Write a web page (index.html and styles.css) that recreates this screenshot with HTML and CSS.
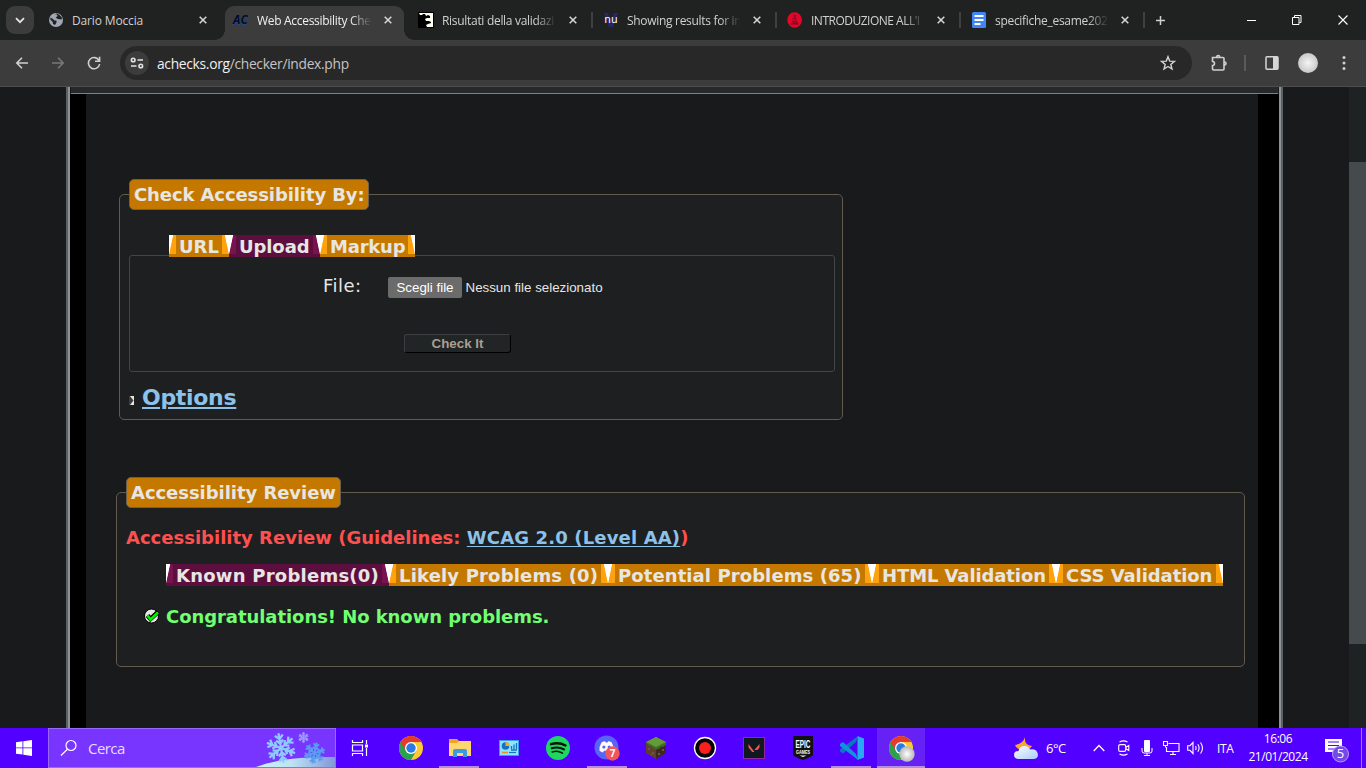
FILE: index.html
```html
<!DOCTYPE html>
<html lang="it">
<head>
<meta charset="utf-8">
<title>Web Accessibility Checker</title>
<link rel="stylesheet" href="styles.css">
</head>
<body>
<div class="screen">
  <header class="tabstrip">
    <button class="tab-search"><svg width="10" height="7" viewBox="0 0 10 7"><path d="M1 1.2l4 4 4-4" fill="none" stroke="#e3e3e3" stroke-width="1.8"/></svg></button>
    <div class="tab first">
      <svg class="fav" width="16" height="16" viewBox="0 0 16 16"><circle cx="8" cy="8" r="7" fill="#a0a7b3"/><path d="M2.3 5.5L5 7l1.500 1.500h2v2l-1.500 2.500-2-1-.5-2.500-2-1.500zM7 2.200l2 .3.500 1.500-1.800 1.800L10 7l3.500.5.500-2L11.500 3 9 1.500z" fill="#202120"/></svg>
      <span class="tab-title t1">Dario Moccia</span>
      <svg class="x" viewBox="0 0 8 8"><path d="M.7.7l6.600 6.600M7.300.7L.7 7.300"/></svg>
    </div>
    <div class="tab active">
      <span class="fav ac">AC</span>
      <span class="tab-title t2">Web Accessibility Che</span>
      <svg class="x" viewBox="0 0 8 8"><path d="M.7.7l6.600 6.600M7.300.7L.7 7.300"/></svg>
    </div>
    <div class="tab third">
      <svg class="fav" width="16" height="16" viewBox="0 0 16 16"><path d="M0 0h16v16H0z" fill="#000"/><path d="M1 1h14v14H9l-1-2 2-1 3-1v-1l-2-1-3 0-1-2 2-1 3 0V4l-2-1-2 1-1-2H5L4 3 2 3z" fill="#fffff2"/></svg>
      <span class="tab-title t3">Risultati della validazi</span>
      <svg class="x" viewBox="0 0 8 8"><path d="M.7.7l6.600 6.600M7.300.7L.7 7.300"/></svg>
    </div>
    <div class="tab sep">
      <span class="fav nu"><svg width="16" height="16" viewBox="0 0 16 16"><path d="M1 1h4l3 9 3-9h4l-5 14H6z" fill="#27266c"/></svg><b>nu</b></span>
      <span class="tab-title t4">Showing results for in</span>
      <svg class="x" viewBox="0 0 8 8"><path d="M.7.7l6.600 6.600M7.300.7L.7 7.300"/></svg>
    </div>
    <div class="tab sep">
      <svg class="fav" width="16" height="16" viewBox="0 0 16 16"><ellipse cx="7.600" cy="8" rx="7.300" ry="7.800" fill="#e5062b"/><path d="M6 3l3 1M7.500 3v3M5.500 6l2 1.500 2-1.500M5 9l2.500 1L10 8.500M4.500 12l2-1.500 1.500 1.500 2-1.500.8 1.500z" fill="none" stroke="#85091e" stroke-width="1.100"/></svg>
      <span class="tab-title t5">INTRODUZIONE ALL'I</span>
      <svg class="x" viewBox="0 0 8 8"><path d="M.7.7l6.600 6.600M7.300.7L.7 7.300"/></svg>
    </div>
    <div class="tab sep last">
      <svg class="fav" width="16" height="16" viewBox="0 0 16 16"><rect x="1" width="14" height="16" rx="1.500" fill="#4285f4"/><path d="M3.500 4h9M3.500 8h9M3.500 12h6" stroke="#fff" stroke-width="1.800"/></svg>
      <span class="tab-title t6">specifiche_esame202</span>
      <svg class="x" viewBox="0 0 8 8"><path d="M.7.7l6.600 6.600M7.300.7L.7 7.300"/></svg>
    </div>
    <div class="newtab"><svg width="11" height="11" viewBox="0 0 11 11"><path d="M5.500 1v9M1 5.500h9" stroke="#cfcfcf" stroke-width="1.500"/></svg></div>
    <div class="winbtns">
      <svg width="9" height="12" viewBox="0 0 9 12"><path d="M0 6.500h9" stroke="#fff"/></svg>
      <svg width="10" height="12" viewBox="0 0 10 12"><path d="M.5 3.500h6.500v7H.5zM2.500 3V1.500H9v7H7.500" fill="none" stroke="#fff"/></svg>
      <svg width="10" height="12" viewBox="0 0 10 12"><path d="M.5 1.500l9 9M9.500 1.500l-9 9" stroke="#fff" stroke-width="1.100"/></svg>
    </div>
  </header>

  <nav class="toolbar">
    <svg width="14" height="14" viewBox="0 0 14 14"><path d="M13 7H2M7 1.800L1.800 7 7 12.200" fill="none" stroke="#d0d0d0" stroke-width="1.600"/></svg>
    <svg width="14" height="14" viewBox="0 0 14 14"><path d="M1 7h11M7 1.800L12.200 7 7 12.200" fill="none" stroke="#787878" stroke-width="1.600"/></svg>
    <svg width="14" height="14" viewBox="0 0 14 14"><path d="M12 4.500A5.600 5.600 0 1 0 12.600 8M12.600.800v4.500H8" fill="none" stroke="#d0d0d0" stroke-width="1.600"/></svg>
    <div class="omnibox">
      <span class="site"><svg width="14" height="12" viewBox="0 0 14 12"><g fill="none" stroke="#e3e3e3" stroke-width="1.600"><circle cx="3.200" cy="3" r="1.800"/><path d="M7.500 3H13M1 9h5.500"/><circle cx="10.800" cy="9" r="1.800"/></g></svg></span>
      <span class="url"><b>achecks.org</b>/checker/index.php</span>
      <svg class="star" width="16" height="16" viewBox="0 0 16 16"><path d="M8 1.700l1.700 4.400 4.700.3-3.600 3 1.200 4.600L8 11.500 4 14l1.200-4.600-3.600-3 4.700-.3z" fill="none" stroke="#d3d3d3" stroke-width="1.400"/></svg>
    </div>
    <div class="actions">
      <svg width="18" height="18" viewBox="0 0 18 18"><path d="M2.500 3.500h10.500q1 0 1 1v10.500q0 1-1 1H3.500q-1 0-1-1v-3.500q2 0 2-2t-2-2zM6.700 3q0-1.500 1.500-1.500T9.700 3M14.500 8q1.500 0 1.500 1.500T14.500 11" fill="none" stroke="#d0d0d0" stroke-width="1.600"/></svg>
      <i></i>
      <svg width="14" height="14" viewBox="0 0 14 14"><rect x="1" y=".8" width="12" height="12.400" rx="1" fill="none" stroke="#d6d6d6" stroke-width="1.500"/><path d="M8 1h5v12H8z" fill="#d6d6d6"/></svg>
      <span class="avatar"></span>
      <svg width="4" height="16" viewBox="0 0 4 16" fill="#d0d0d0"><circle cx="2" cy="2.500" r="1.500"/><circle cx="2" cy="8" r="1.500"/><circle cx="2" cy="13.500" r="1.500"/></svg>
    </div>
  </nav>

  <main class="viewport">
    <div class="page">
      <div class="topline"></div>
      <div class="content">
        <section class="fieldset check">
          <h2 class="legend l1">Check Accessibility By:</h2>
          <div class="subtabs">
            <span class="st w60">URL</span><span class="st on w91">Upload</span><span class="st w95">Markup</span>
          </div>
          <div class="inner">
            <div class="filerow"><label>File:</label><button class="choose">Scegli file</button><span class="nofile">Nessun file selezionato</span></div>
            <button class="checkit">Check It</button>
          </div>
          <div class="options"><svg width="5" height="9" viewBox="0 0 5 9"><path d="M0 0h5v9H0z" fill="#e8e6e3"/><path d="M0 0l1 0 3.500 4.500L1 9H0z" fill="#3c3c3c"/></svg><a>Options</a></div>
        </section>
        <section class="fieldset review">
          <h2 class="legend l2">Accessibility Review</h2>
          <h3 class="guide">Accessibility Review (Guidelines: <a>WCAG 2.0 (Level AA)</a>)</h3>
          <div class="subtabs">
            <span class="st on w223">Known Problems(0)</span><span class="st w219">Likely Problems (0)</span><span class="st w264">Potential Problems (65)</span><span class="st w184">HTML Validation</span><span class="st w167">CSS Validation</span>
          </div>
          <p class="congrats"><svg width="16" height="16" viewBox="0 0 16 16"><circle cx="7.500" cy="8" r="7" fill="#e8e6e3" stroke="#000"/><path d="M3.500 7.500l3 3.500 7.500-7" fill="none" stroke="#000" stroke-width="4.500"/><path d="M3.500 7.500l3 4 7.500-7" fill="none" stroke="#00f000" stroke-width="2.600"/></svg><span>Congratulations! No known problems.</span></p>
        </section>
      </div>
    </div>
    <div class="scroll"><div class="thumb"></div></div>
  </main>

  <footer class="taskbar">
    <div class="start"><svg width="16" height="16" viewBox="0 0 16 16" fill="#fff"><path d="M0 2.200l6.500-.9v6.200H0zM7.300 1.200L16 0v7.500H7.300zM0 8.300h6.500v6.300L0 13.700zM7.300 8.300H16V16l-8.700-1.200z"/></svg></div>
    <div class="search">
      <svg width="18" height="18" viewBox="0 0 18 18"><circle cx="11" cy="6.500" r="5" fill="none" stroke="#fff" stroke-width="1.200"/><path d="M7.400 10.200L1 16.500" stroke="#fff" stroke-width="1.200"/></svg>
      <span>Cerca</span>
      <svg class="snow" width="79" height="38" viewBox="0 0 79 38">
        <defs><linearGradient id="hill" x2="1"><stop stop-color="#c9f3f8"/><stop offset=".45" stop-color="#bde3f5"/><stop offset="1" stop-color="#8298da"/></linearGradient>
        <g id="flake"><g id="arm"><path d="M0 0V-15M-4-13L0-9 4-13M-3.500-8L0-4.500 3.500-8"/></g><use href="#arm" transform="rotate(60)"/><use href="#arm" transform="rotate(120)"/><use href="#arm" transform="rotate(180)"/><use href="#arm" transform="rotate(240)"/><use href="#arm" transform="rotate(300)"/></g></defs>
        <path d="M0 38Q28 27 79 28v10z" fill="url(#hill)"/>
        <use href="#flake" transform="translate(25 19) rotate(-10)" fill="none" stroke="#8fcaff" stroke-width="2.300"/>
        <use href="#flake" transform="translate(47.500 8.500) scale(.36)" fill="none" stroke="#9c9eff" stroke-width="2.800"/>
        <use href="#flake" transform="translate(58.500 24) rotate(12) scale(.72)" fill="none" stroke="#5b9cf2" stroke-width="2.600"/>
      </svg>
    </div>
    <div class="task tv"><svg width="18" height="16" viewBox="0 0 18 16"><path d="M1.500 0v2.500h10V0M1.500 16v-2.500h10V16M1.500 5h10v6h-10zM15.500 0v4M15.500 8v8" fill="none" stroke="#fff" stroke-width="1.200"/><path d="M14 4.500h3v3h-3z" fill="#fff"/></svg></div>
    <div class="apps">
      <div class="task"><svg width="24" height="24" viewBox="0 0 24 24"><use href="#chrome"/><defs><g id="chrome"><circle cx="12" cy="12" r="12" fill="#fcc934"/><path d="M1.600 6A12 12 0 0 0 12 24L17.200 15 12 12z" fill="#2aa14b"/><path d="M1.600 6A12 12 0 0 1 22.400 6H12L6.800 15z" fill="#e33b2e"/><circle cx="12" cy="12" r="6" fill="#fff"/><circle cx="12" cy="12" r="4.700" fill="#287be8"/></g></defs></svg></div>
      <div class="task open"><svg width="22" height="20" viewBox="0 0 22 20"><path d="M0 1h8l2 2h12v15H0z" fill="#eba81d"/><path d="M0 5h8l2-2h12v15H0z" fill="#ffd66e"/><path d="M4 19v-6q0-2 2-2h10q2 0 2 2v6h-4v-4H8v4z" fill="#3c9be0"/></svg></div>
      <div class="task"><svg width="20" height="16" viewBox="0 0 20 16"><rect x=".5" y=".5" width="19" height="15" fill="#8ee4ff" stroke="#399ee6"/><circle cx="6.500" cy="6" r="3.800" fill="#1671be"/><path d="M6.500 6V2a4 4 0 0 1 4 4z" fill="#f7a62e"/><path d="M12.500 9V6M15 9V4.500M17.500 9V3M12 10h6" stroke="#1671be" stroke-width="1.300"/><path d="M3 12.500h6" stroke="#ed8e21" stroke-width="1.600"/><path d="M10 12.500h7" stroke="#1671be" stroke-width="1.200"/></svg></div>
      <div class="task"><svg width="24" height="24" viewBox="0 0 24 24"><circle cx="12" cy="12" r="12" fill="#1ed760"/><g fill="none" stroke="#08120a" stroke-linecap="round"><path d="M5 8.200q8-2.300 14.500 1.300" stroke-width="2.400"/><path d="M5.700 12.200q6.800-1.900 12.300 1.200" stroke-width="2"/><path d="M6.200 15.900q5.500-1.600 10.300 1.200" stroke-width="1.600"/></g></svg></div>
      <div class="task open d"><svg width="26" height="26" viewBox="0 0 26 26"><circle cx="12.500" cy="12.500" r="12" fill="#5865f2"/><path d="M7.500 7.500q2-1.200 3.500-1.200l.7 1.200h1.800l.7-1.200q1.800 0 3.500 1.200 2.500 4 2 8.300-1.500 1.200-3.500 1.700l-1-1.700H10l-1 1.700q-2-.5-3.500-1.700Q5 11.500 7.500 7.500z" fill="#fff"/><circle cx="9.900" cy="12" r="1.600" fill="#5865f2"/><circle cx="15.200" cy="12" r="1.600" fill="#5865f2"/><circle cx="18.500" cy="18.500" r="7.200" fill="#f0565b"/><text x="18.500" y="22.200" text-anchor="middle" class="badge7">7</text></svg></div>
      <div class="task"><svg width="22" height="24" viewBox="0 0 22 24"><path d="M1 6l10-5 10 5v11l-10 6-10-6z" fill="#5d402e"/><path d="M11 11l10-5v11l-10 6z" fill="#3c291f"/><path d="M1 6l10-5 10 5v3l-2 1-1 1-2-.5-2 2.500-1-.5-2 1.500-2-2-1 .5-2-2.500-2 0-2-2z" fill="#426d28"/><path d="M1 6l10-5 10 5-10 5z" fill="#629b38"/><path d="M3 12h2v2H3zM7 16h2v2H7zM5 18h2v2zM13 17h2v2h-2zM17 13h2v2h-2z" fill="#765441"/></svg></div>
      <div class="task"><svg width="24" height="24" viewBox="0 0 24 24"><circle cx="12" cy="12" r="10.500" fill="#050507" stroke="#fff" stroke-width="1.300"/><circle cx="12" cy="12" r="6" fill="#fb2020"/></svg></div>
      <div class="task"><svg width="22" height="22" viewBox="0 0 22 22"><rect x=".5" y=".5" width="21" height="21" fill="#101820" stroke="#8e299c"/><path d="M5.500 7l6 8H9.200L5.500 10.500zM16.500 7v3.500L14.500 13h-3.200z" fill="#ff4c57"/></svg></div>
      <div class="task"><svg width="22" height="24" viewBox="0 0 22 24"><path d="M1 0h20v19q-1 1.500-10 5Q2 20.500 1 19z" fill="#121014"/><text x="11" y="11.500" text-anchor="middle" class="epic" textLength="15" lengthAdjust="spacingAndGlyphs">EPIC</text><text x="11" y="17.500" text-anchor="middle" class="games" textLength="14" lengthAdjust="spacingAndGlyphs">GAMES</text><path d="M7.500 19.500h7L11 21z" fill="#fff"/></svg></div>
      <div class="task open"><svg width="24" height="24" viewBox="0 0 24 24"><path d="M18 0l-2 6L3 17.500 0 15.500v-2z" fill="#0878bd"/><path d="M18 24l-2-6L3 6 0 8v2z" fill="#1094da"/><path d="M17.500 0L24 2.500v19L17.500 24z" fill="#27a9f3"/></svg></div>
      <div class="task open current"><svg width="28" height="28" viewBox="0 0 28 28"><defs><radialGradient id="ball"><stop stop-color="#fff"/><stop offset="1" stop-color="#b8b8b8"/></radialGradient></defs><use href="#chrome" x="2" y="2"/><circle cx="20" cy="20" r="7.700" fill="url(#ball)"/></svg></div>
    </div>
    <div class="tray">
      <svg class="weather" width="26" height="26" viewBox="0 0 26 26"><defs><linearGradient id="cloud" x2="1" y2="1"><stop stop-color="#fff"/><stop offset="1" stop-color="#a9cdf7"/></linearGradient></defs><path d="M12 2q-1 8 7 9-3 5-9 4-7-1-8-5 8-1 10-8z" fill="#f7a733"/><path d="M5 24q-4-.5-4-4 0-4 4.500-4 1-5 6-5 4 0 5.500 3.500 7-1 8 5 0 4-4 4.500z" fill="url(#cloud)"/></svg>
      <span class="temp">6°C</span>
      <svg class="up" width="12" height="8" viewBox="0 0 12 8"><path d="M.7 7L6 1.500 11.300 7" fill="none" stroke="#fff" stroke-width="1.300"/></svg>
      <svg class="cam" width="12" height="16" viewBox="0 0 12 16"><path d="M1.500 2Q5.500-.2 9.500 2M1.500 14Q5.500 16.200 9.500 14M2.200 4.600h4q1.500 0 1.500 1.500v3.800q0 1.500-1.500 1.500h-4q-1.500 0-1.500-1.500V6.100q0-1.500 1.500-1.500zM8 7.200L10.800 5.500v5L8 8.800" fill="none" stroke="#fff" stroke-width="1.100"/></svg>
      <svg class="mic" width="12" height="16" viewBox="0 0 12 16"><rect x="3" width="6" height="12" rx="1" fill="#fff"/><path d="M1 8v3q0 2 2 2h6q2 0 2-2V8M6 13v2.500M3 15.500h6" fill="none" stroke="#fff"/></svg>
      <svg class="net" width="17" height="15" viewBox="0 0 17 15"><path d="M5.500 2.500h10.500v8H3.500V6M7 13.500h6M10 10.500v3M.5.500h4v4h-4zM2.500 4.500v2" fill="none" stroke="#fff" stroke-width="1.100"/></svg>
      <svg class="vol" width="17" height="14" viewBox="0 0 17 14"><path d="M.7 4.700H3L6 1.500v11L3 9.300H.7zM8.500 5q1.200 2 0 4M10.800 3.300q2.600 3.700 0 7.400M13.500 1.500q4 5.500 0 11" fill="none" stroke="#fff" stroke-width="1.100"/></svg>
      <span class="lang">ITA</span>
      <div class="clock"><span>16:06</span><span class="date">21/01/2024</span></div>
      <svg class="note" width="25" height="26" viewBox="0 0 25 26"><path d="M0 2h17v13h-5l-2 2-3-2H0z" fill="#fff"/><path d="M3 5h11M3 8.500h11M3 12h7" stroke="#5500ff"/><circle cx="15.500" cy="17" r="8" fill="#7748e8" stroke="#b19cf5"/><text x="15.500" y="21.200" text-anchor="middle" class="five">5</text></svg>
    </div>
  </footer>
</div>
</body>
</html>
```

FILE: styles.css
```css
* { box-sizing: border-box; }
body { margin: 0; background: #181a1b; }
svg { display: block; flex: none; }
button { border: 0; padding: 0; display: block; }
h2, h3, p { margin: 0; }
.screen { width: 1366px; height: 768px; overflow: hidden; display: flex; flex-direction: column; font-family: "Open Sans", "Noto Sans", sans-serif; }

/* browser tab strip */
.tabstrip { height: 40px; flex: none; background: #202221; display: flex; }
.tab-search { width: 28px; height: 28px; margin: 6px 7px 0 6px; border-radius: 9px; background: #3c3c3c; display: flex; align-items: center; justify-content: center; flex: none; }
.tab { width: 184px; flex: none; height: 40px; padding: 0 17px 0 7px; display: flex; align-items: center; position: relative; }
.tab.active { width: 179px; margin-top: 6px; height: 34px; padding: 0 12px 6px 8px; background: #3c3c3c; border-radius: 9px 9px 0 0; }
.tab.active::before, .tab.active::after { content: ""; position: absolute; bottom: 0; width: 10px; height: 10px; }
.tab.active::before { left: -10px; background: radial-gradient(circle at 0 0, #202221 9.500px, #3c3c3c 10px); }
.tab.active::after { right: -10px; background: radial-gradient(circle at 100% 0, #202221 9.500px, #3c3c3c 10px); }
.tab.third { width: 188px; padding-left: 14px; padding-right: 15px; }
.tab.sep { padding-left: 11px; padding-right: 15px; }
.tab.sep::before { content: ""; position: absolute; left: -1px; top: 12px; width: 2px; height: 16px; background: #3f4141; }
.tab.last::after { content: ""; position: absolute; right: -1px; top: 12px; width: 2px; height: 16px; background: #3f4141; }
.tab.first { width: 177px; padding-right: 11px; }
.tab.first + .tab { margin-left: 7px; }
.fav { width: 16px; height: 16px; margin-right: 8px; flex: none; }
.tab.third .fav { margin-right: 8px; }
.ac { font: italic bold 12px/15px "Open Sans", sans-serif; color: #070b22; text-shadow: 1px 1px 0 #204692; }
.nu { position: relative; }
.nu b { position: absolute; left: 0; top: 0; width: 16px; text-align: center; font: 10.500px/15px "DejaVu Sans", sans-serif; color: #fff; }
.tab-title { flex: 1; min-width: 0; white-space: nowrap; font-size: 12px; line-height: 18px; color: #d0d0d0; margin-right: 10px; padding-top: 1px; }
.t1 { letter-spacing: -.15px; }
.active .tab-title { color: #f0f0f0; }
.t2, .t3, .t4, .t5, .t6 { -webkit-mask-image: linear-gradient(90deg, #000 80%, transparent 98%); mask-image: linear-gradient(90deg, #000 80%, transparent 98%); letter-spacing: -.3px; }
.t5 { letter-spacing: -.5px; }
.x { width: 8px; height: 8px; }
.x path { stroke: #d8d8d8; stroke-width: 1.500; fill: none; }
.newtab { width: 40px; padding: 15px 0 0 11px; }
.winbtns { flex: 1; display: flex; justify-content: flex-end; align-items: center; gap: 36px; padding-right: 18px; }

/* address toolbar */
.toolbar { height: 47px; flex: none; background: #3c3c3c; border-bottom: 1px solid #4b4d4e; display: flex; align-items: center; gap: 22px; padding-left: 15px; }
.omnibox { width: 1072px; height: 34px; margin-left: -3px; border-radius: 17px; background: #282828; display: flex; align-items: center; padding: 0 16px 0 5px; }
.site { width: 24px; height: 24px; border-radius: 50%; background: #3c3c3c; display: flex; align-items: center; justify-content: center; margin-right: 8px; }
.url { flex: 1; font-size: 13.800px; line-height: 20px; letter-spacing: -.3px; padding-top: 1px; color: #c4c4c4; }
.url b { font-weight: 400; color: #f0f0f0; }
.actions { display: flex; align-items: center; margin-left: -4px; }
.actions i { width: 2px; height: 16px; background: #5a5a5a; margin: 0 19px 0 16px; }
.avatar { width: 20px; height: 20px; border-radius: 50%; background: radial-gradient(#f5f5f5, #b5b5b5); margin: 0 24px 0 19px; }

/* page area */
.viewport { height: 641px; flex: none; background: #181a1b; display: flex; justify-content: space-between; }
.page { width: 1217px; margin-left: 66px; background: #181a1b; border: 4px solid; border-width: 0 4px; border-image: linear-gradient(90deg, #596266 0 2px, #8e9293 2px 4px, #8e9293 1213px 1215px, #596266 1215px) 0 4; }
.topline { height: 7px; margin: 0 1px; background: #25292b; border-bottom: 1px solid #877f72; }
.content { margin: 0; height: 634px; border: solid #000; border-width: 0 21px 0 16px; padding: 85px 0 0 30px; }
.fieldset { border: 1px solid #615a4d; border-radius: 5px; background: #1d1f20; font-family: Verdana, "DejaVu Sans", sans-serif; }
.check { width: 724px; height: 226px; margin: 15px 0 72px 3px; padding: 0 7px 0 9px; }
.review { width: 1129px; height: 175px; padding: 0 9px; }
.legend { height: 31px; margin-top: -16px; border: 1px solid #6b604f; border-radius: 5px; background: #c57800; color: #e8e6e3; font-size: 18px; line-height: 29px; padding-left: 4px; white-space: nowrap; }
.l1 { width: 240px; letter-spacing: -.1px; }
.l2 { width: 215px; letter-spacing: -.05px; }
.subtabs { display: flex; height: 22px; margin-left: 40px; }
.check .subtabs { margin-top: 25px; position: relative; z-index: 1; }
.st { height: 22px; padding-left: 10px; font-size: 18px; font-weight: 700; line-height: 23px; color: #e8e6e3; white-space: nowrap; position: relative; background: #c57800; --edge: #ffa20c; }
.st.on { background: #5c0f3e; --edge: #78134f; }
.st::before, .st::after { content: ""; position: absolute; top: 0; width: 7px; height: 19px; background: linear-gradient(102deg, #fff 3.700px, var(--edge) 4.500px); }
.st::before { left: 0; }
.st::after { right: 0; transform: scaleX(-1); }
.w60 { width: 60px; } .w91 { width: 91px; letter-spacing: -.1px; } .w95 { width: 95px; letter-spacing: -.2px; }
.w223 { width: 223px; letter-spacing: .24px; } .w219 { width: 219px; letter-spacing: .17px; } .w264 { width: 264px; letter-spacing: .09px; } .w184 { width: 184px; letter-spacing: -.1px; } .w167 { width: 167px; letter-spacing: -.07px; }
.inner { height: 117px; margin-top: -2px; border: 1px solid #414648; border-radius: 3px; }
.filerow { display: flex; margin: 21px 0 0 193px; height: 21px; color: #e8e6e3; }
.filerow label { width: 65px; font-size: 18px; line-height: 18px; letter-spacing: .5px; }
.choose { width: 74px; height: 21px; border-radius: 2px; background: #6b6b6b; color: #fff; font: 13.330px/21px "Liberation Sans", sans-serif; text-align: center; }
.nofile { font: 13.330px/21px "Liberation Sans", sans-serif; margin-left: 3.500px; }
.checkit { width: 107px; height: 19px; margin: 36px 0 0 274px; border: 1px solid; border-color: #3b3f41 #000 #000 #3b3f41; border-radius: 3px; background: #222526; color: #a89f92; font: bold 13.330px/17px "Liberation Sans", sans-serif; }
.options { display: flex; align-items: center; height: 28px; margin-top: 12px; font-size: 22px; font-weight: 700; line-height: 28px; letter-spacing: -.3px; }
.options svg { margin: 4px 8px 0 0; }
.fieldset a { color: #8cc2ea; text-decoration: underline; text-underline-offset: 2px; }
.guide { margin-top: 18px; height: 24px; font-size: 18px; line-height: 24px; color: #ff5050; white-space: nowrap; }
.guide a { letter-spacing: .15px; }
.review .subtabs { margin-top: 14px; }
.congrats { display: flex; align-items: center; margin: 19px 0 0 18px; height: 24px; font-size: 18px; font-weight: 700; color: #72ff72; line-height: 24px; letter-spacing: -.06px; white-space: nowrap; }
.congrats svg { margin: -2px 6px 0 0; }
.scroll { width: 17px; background: #1f2223; padding-top: 75px; }
.thumb { height: 482px; background: #454a4d; }

/* taskbar */
.taskbar { height: 40px; flex: none; background: #5200ff; display: flex; color: #fff; }
.start { width: 48px; padding: 12px 16px; }
.search { width: 288px; border: 1px solid #9a67fc; background: #7735ff; display: flex; align-items: center; padding-left: 11px; font-size: 15px; color: #e7dcff; overflow: hidden; }
.search span { margin-left: 10px; letter-spacing: -.55px; flex: 1; }
.task { width: 49px; height: 40px; display: flex; align-items: center; justify-content: center; position: relative; }
.tv { width: 48px; }
.apps { display: flex; margin-left: 2px; }
.open::after { content: ""; position: absolute; left: 4px; bottom: 0; width: 40px; height: 2px; background: #b48ee2; }
.open.d::after { left: 5px; }
.current { width: 48px; background: #6622f4; margin-left: 1px; }
.open.current::after { left: 0; width: 48px; }
.badge7 { font: bold 10px "Open Sans", sans-serif; fill: #fff; }
.epic { font: bold 11px "Liberation Sans", sans-serif; fill: #fff; }
.games { font: bold 5px "Liberation Sans", sans-serif; fill: #fff; }
.tray { flex: 1; display: flex; align-items: center; font-size: 12px; border-right: 1px solid #a274ff; margin-right: 4px; }
.weather { margin-left: 88px; }
.temp { width: 47px; margin-left: 7px; font-size: 13px; letter-spacing: -.5px; }
.cam { margin-left: 13px; }
.mic { margin-left: 11px; }
.net { margin-left: 10px; }
.vol { margin-left: 7px; }
.lang { margin-left: 13px; letter-spacing: -.4px; width: 30px; }
.clock { width: 62px; display: flex; flex-direction: column; align-items: center; line-height: 18px; letter-spacing: -.45px; }
.note { margin-left: 16px; margin-top: 4px; }
.five { font: 13px "Open Sans", sans-serif; fill: #fff; }
```
